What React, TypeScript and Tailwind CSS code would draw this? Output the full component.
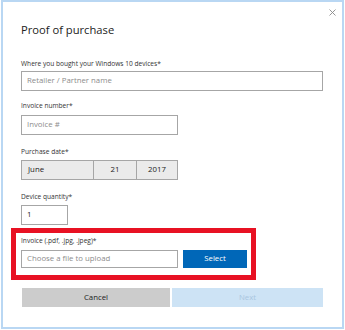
import React from "react";

const font = { fontFamily: '"Open Sans", "Noto Sans", Arial, sans-serif' };

function Label({ text, className = "" }: { text: string; className?: string }) {
  return (
    <div className={`text-[6.6px] leading-[10px] text-[#333333] ${className}`}>
      {text}
    </div>
  );
}

function TextBox({
  placeholder,
  value,
  className = "",
}: {
  placeholder?: string;
  value?: string;
  className?: string;
}) {
  return (
    <div
      className={`flex items-center border border-[#a6a6a6] bg-white pl-[5px] text-[7.8px] ${
        value ? "text-[#222222]" : "text-[#8c8c8c]"
      } ${className}`}
    >
      {value ?? placeholder}
    </div>
  );
}

export default function App() {
  return (
    <div className="w-[345px] h-[330px] bg-white" style={font}>
      <div className="relative ml-[1px] w-[343px] h-[329px] border-2 border-[#b9d7f3] bg-white pl-[18px]">
        {/* close */}
        <svg
          className="absolute top-[7px] right-[6px]"
          width="7"
          height="7"
          viewBox="0 0 7 7"
        >
          <path d="M0.5 0.5 L6.5 6.5 M6.5 0.5 L0.5 6.5" stroke="#8a8a8a" strokeWidth="0.9" />
        </svg>

        <div className="mt-[20px] text-[11.2px] leading-[16px] text-[#222222]">
          Proof of purchase
        </div>

        <Label text="Where you bought your Windows 10 devices*" className="mt-[21px]" />
        <TextBox placeholder="Retailer / Partner name" className="mt-[2px] h-[20px] w-[302px]" />

        <Label text="Invoice number*" className="mt-[10px]" />
        <TextBox placeholder="Invoice #" className="mt-[4px] h-[20px] w-[157px]" />

        <Label text="Purchase date*" className="mt-[12px]" />
        <div className="mt-[3px] flex h-[20px] w-[157px] border border-[#a6a6a6] bg-[#ebebeb] text-[7.8px] text-[#222222]">
          <div className="flex w-[72px] items-center pl-[6px] border-r border-[#a6a6a6]">June</div>
          <div className="flex w-[43px] items-center justify-center border-r border-[#a6a6a6]">21</div>
          <div className="flex flex-1 items-center justify-center">2017</div>
        </div>

        <Label text="Device quantity*" className="mt-[12px]" />
        <TextBox value="1" className="mt-[3px] h-[20px] w-[47px]" />

        <div className="-ml-[10px] mt-[3px] w-[245px] border-[5px] border-[#e81123] pl-[5px] pt-[3px] pb-[7px]">
          <Label text="Invoice (.pdf, .jpg, .jpeg)*" />
          <div className="mt-[4px] flex gap-[5px]">
            <TextBox placeholder="Choose a file to upload" className="h-[18px] w-[157px]" />
            <div className="flex h-[18px] w-[64px] items-center justify-center bg-[#0067b8] text-[7.8px] text-white">
              Select
            </div>
          </div>
        </div>

        <div className="ml-[1px] mt-[8px] flex gap-[2px]">
          <div className="flex h-[19px] w-[148px] items-center justify-center bg-[#cccccc] text-[7.8px] text-[#222222]">
            Cancel
          </div>
          <div className="flex h-[19px] w-[151px] items-center justify-center bg-[#cde3f5] text-[7.8px] text-[#a9c6df]">
            Next
          </div>
        </div>
      </div>
    </div>
  );
}
